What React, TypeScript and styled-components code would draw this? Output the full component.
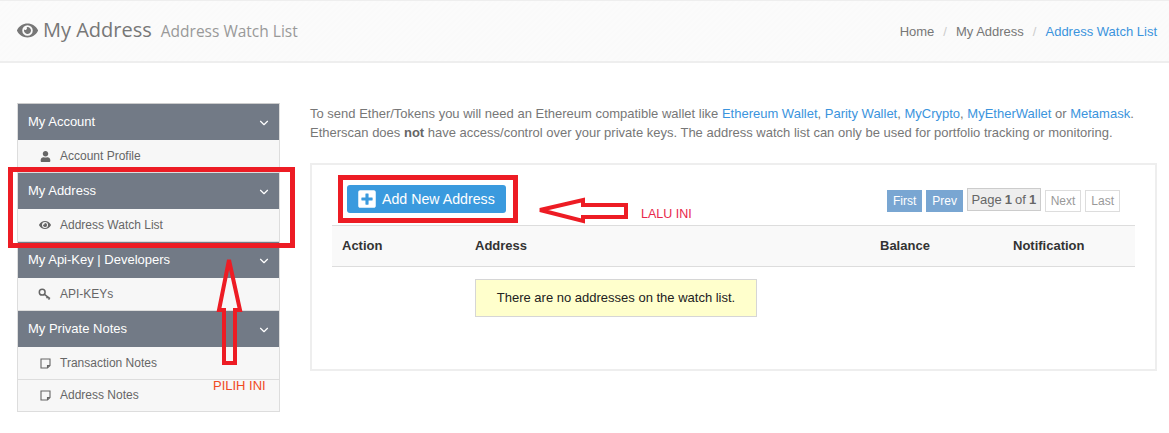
import React from 'react';
import styled, { createGlobalStyle } from 'styled-components';
import { FaEye, FaUser, FaPlusSquare } from 'react-icons/fa';
import { FiChevronDown } from 'react-icons/fi';

const GlobalStyle = createGlobalStyle`
  html, body {
    margin: 0;
    padding: 0;
    background: #fff;
  }
  body {
    font-family: 'Liberation Sans', Arial, sans-serif;
    font-size: 12px;
    color: #777;
  }
`;

const Page = styled.div`
  position: relative;
  width: 1169px;
  height: 433px;
  overflow: hidden;
`;

const Header = styled.header`
  height: 60px;
  display: flex;
  align-items: center;
  justify-content: space-between;
  padding: 0 12px 0 17px;
  background: repeating-linear-gradient(135deg, #fbfbfb 0 2px, #fafafa 2px 4px);
  border-top: 1px solid #eee;
  border-bottom: 2px solid #eee;
`;

const Title = styled.div`
  display: flex;
  align-items: baseline;
  padding-bottom: 4px;
  font-family: 'Open Sans', 'Liberation Sans', sans-serif;
  color: #777;
`;

const TitleIcon = styled.span`
  display: inline-flex;
  font-size: 21px;
  margin: 2px 5px 0 0;
  align-self: center;
  color: #777;
`;

const TitleMain = styled.span`
  font-size: 20px;
`;

const TitleSub = styled.span`
  font-size: 15.5px;
  color: #999;
  margin-left: 9px;
`;

const Crumbs = styled.nav`
  display: flex;
  font-size: 13px;
  color: #777;
`;

const Sep = styled.span`
  color: #ccc;
  margin: 0 9px;
`;

const Link = styled.a`
  color: #3b94dd;
`;

const Body = styled.div`
  display: flex;
  gap: 30px;
  padding: 40px 12px 0 17px;
`;

const Side = styled.aside`
  width: 263px;
  flex-shrink: 0;
  border: 1px solid #ddd;
  border-top-color: #ccc;
  box-sizing: border-box;
  height: 309px;
  background: #f7f7f7;
`;

const Group = styled.div`
  height: 36px;
  box-sizing: border-box;
  display: flex;
  align-items: center;
  justify-content: space-between;
  padding: 0 8px 2px 10px;
  background: #727a86;
  color: #fff;
  font-size: 13px;

  svg {
    margin-top: 3px;
  }
`;

const Item = styled.div<{ $tall?: boolean }>`
  height: ${(p) => (p.$tall ? 31 : 33)}px;
  box-sizing: border-box;
  display: flex;
  align-items: center;
  padding-left: 20px;
  padding-bottom: ${(p) => (p.$tall ? 1 : 0)}px;
  font-size: 12px;
  color: #666;
  background: #f7f7f7;
  border-bottom: ${(p) => (p.$tall ? 'none' : '1px solid #ddd')};
`;

const ItemIcon = styled.span`
  display: inline-flex;
  justify-content: center;
  width: 14px;
  margin-right: 8px;
  font-size: 12px;
  color: #666;
`;

const Main = styled.main`
  flex: 1;
  min-width: 0;
`;

const Intro = styled.p`
  margin: 0;
  font-size: 13px;
  line-height: 19px;
  padding-top: 1px;
  color: #777;
  white-space: nowrap;

  b {
    color: #666;
  }
`;

const Panel = styled.section`
  margin-top: 21px;
  height: 208px;
  box-sizing: border-box;
  border: 2px solid #eee;
  padding: 0 20px;
`;

const Toolbar = styled.div`
  height: 60px;
  display: flex;
  justify-content: space-between;
  align-items: flex-start;
`;

const AddButton = styled.button`
  margin: 20px 0 0 15px;
  width: 159px;
  height: 28px;
  display: flex;
  align-items: center;
  gap: 5px;
  padding: 0 0 0 10px;
  border: none;
  border-radius: 3px;
  background: #3a9ade;
  color: #fff;
  font-family: inherit;
  font-size: 14.2px;
`;

const Pager = styled.div`
  margin: 23px 15px 0 0;
  display: flex;
  align-items: flex-start;
  gap: 4px;
`;

const PageBtn = styled.span<{ $on?: boolean }>`
  margin-top: 2px;
  height: 22px;
  box-sizing: border-box;
  padding: 0 5px;
  display: flex;
  align-items: center;
  font-size: 12px;
  color: ${(p) => (p.$on ? '#fff' : '#999')};
  background: ${(p) => (p.$on ? '#79a6d2' : '#fff')};
  border: 1px solid ${(p) => (p.$on ? '#79a6d2' : '#ddd')};
`;

const PageInfo = styled.span`
  height: 23px;
  box-sizing: border-box;
  padding: 0 3.5px 1px;
  display: flex;
  align-items: center;
  gap: 3px;
  font-size: 13px;
  color: #666;
  background: #eee;
  border: 1px solid #ccc;
`;

const Table = styled.div`
  display: grid;
  grid-template-columns: 133px 405px 133px 1fr;
  height: 42px;
  align-items: center;
  background: #f9f9f9;
  border-top: 1px solid #ddd;
  border-bottom: 1px solid #ddd;
  box-sizing: border-box;
  padding: 0 0 2px 10px;
  font-size: 13px;
  font-weight: bold;
  color: #333;
`;

const Empty = styled.div`
  margin: 12px 0 0 143px;
  width: 282px;
  height: 38px;
  box-sizing: border-box;
  display: flex;
  align-items: center;
  justify-content: center;
  padding-bottom: 2px;
  background: #ffc;
  border: 1px solid #d6d6d6;
  font-size: 13px;
  color: #222;
`;

const Marks = styled.svg`
  position: absolute;
  left: 0;
  top: 0;
  pointer-events: none;
`;

const Note = styled.span<{ $c: string; $x: number; $y: number; $s: number }>`
  position: absolute;
  left: ${(p) => p.$x}px;
  top: ${(p) => p.$y}px;
  font-size: ${(p) => p.$s}px;
  color: ${(p) => p.$c};
`;

const KeyIcon = () => (
  <svg width="14" height="13" viewBox="0 0 14 13" fill="none" stroke="currentColor" strokeWidth="1.5">
    <circle cx="4.2" cy="4.2" r="2.9" />
    <path d="M6.4 6.4 L12 10.6 M9.6 8.8 L8.6 10.2 M11.4 10.2 L10.6 11.6" />
  </svg>
);

const NoteIcon = () => (
  <svg width="11" height="11" viewBox="0 0 11 11" fill="none" stroke="currentColor" strokeWidth="1.1">
    <path d="M1 1 H10 V7.5 L7.5 10 H1 Z M7.5 10 V7.5 H10" />
  </svg>
);

const menu = [
  { name: 'My Account', items: [{ label: 'Account Profile', icon: <FaUser size={11} /> }] },
  { name: 'My Address', items: [{ label: 'Address Watch List', icon: <FaEye /> }] },
  { name: 'My Api-Key | Developers', items: [{ label: 'API-KEYs', icon: <KeyIcon /> }] },
  {
    name: 'My Private Notes',
    items: [
      { label: 'Transaction Notes', icon: <NoteIcon /> },
      { label: 'Address Notes', icon: <NoteIcon /> },
    ],
  },
];

export default function App() {
  return (
    <Page>
      <GlobalStyle />
      <Header>
        <Title>
          <TitleIcon>
            <FaEye />
          </TitleIcon>
          <TitleMain>My Address</TitleMain>
          <TitleSub>Address Watch List</TitleSub>
        </Title>
        <Crumbs>
          Home<Sep>/</Sep>My Address<Sep>/</Sep>
          <Link>Address Watch List</Link>
        </Crumbs>
      </Header>
      <Body>
        <Side>
          {menu.map((g) => (
            <div key={g.name}>
              <Group>
                {g.name}
                <FiChevronDown size={14} />
              </Group>
              {g.items.map((it) => (
                <Item key={it.label} $tall={it.label === 'Address Notes'}>
                  <ItemIcon>{it.icon}</ItemIcon>
                  {it.label}
                </Item>
              ))}
            </div>
          ))}
        </Side>
        <Main>
          <Intro>
            To send Ether/Tokens you will need an Ethereum compatible wallet like <Link>Ethereum Wallet</Link>,{' '}
            <Link>Parity Wallet</Link>, <Link>MyCrypto</Link>, <Link>MyEtherWallet</Link> or <Link>Metamask</Link>.
            <br />
            Etherscan does <b>not</b> have access/control over your private keys. The address watch list can only be
            used for portfolio tracking or monitoring.
          </Intro>
          <Panel>
            <Toolbar>
              <AddButton>
                <FaPlusSquare size={20} />
                Add New Address
              </AddButton>
              <Pager>
                <PageBtn $on>First</PageBtn>
                <PageBtn $on>Prev</PageBtn>
                <PageInfo>
                  Page <b>1</b> of <b>1</b>
                </PageInfo>
                <PageBtn>Next</PageBtn>
                <PageBtn>Last</PageBtn>
              </Pager>
            </Toolbar>
            <Table>
              <span>Action</span>
              <span>Address</span>
              <span>Balance</span>
              <span>Notification</span>
            </Table>
            <Empty>There are no addresses on the watch list.</Empty>
          </Panel>
        </Main>
      </Body>
      <Marks width="1169" height="433" fill="none" stroke="#ed1c24">
        <rect x="10.5" y="169.5" width="282" height="76" strokeWidth="5" />
        <rect x="340.5" y="177.5" width="175" height="43" strokeWidth="5" />
        <path
          d="M229 260 L219 310 L224 310 L224 363 L235 363 L235 310 L240 310 Z"
          strokeWidth="4"
        />
        <path
          d="M540 210 L583 200 L583 205 L626 205 L626 217 L583 217 L583 221 Z"
          strokeWidth="4"
        />
      </Marks>
      <Note $c="#f04a23" $x={213} $y={378} $s={13}>
        PILIH INI
      </Note>
      <Note $c="#e8264a" $x={641} $y={207} $s={12.5}>
        LALU INI
      </Note>
    </Page>
  );
}
